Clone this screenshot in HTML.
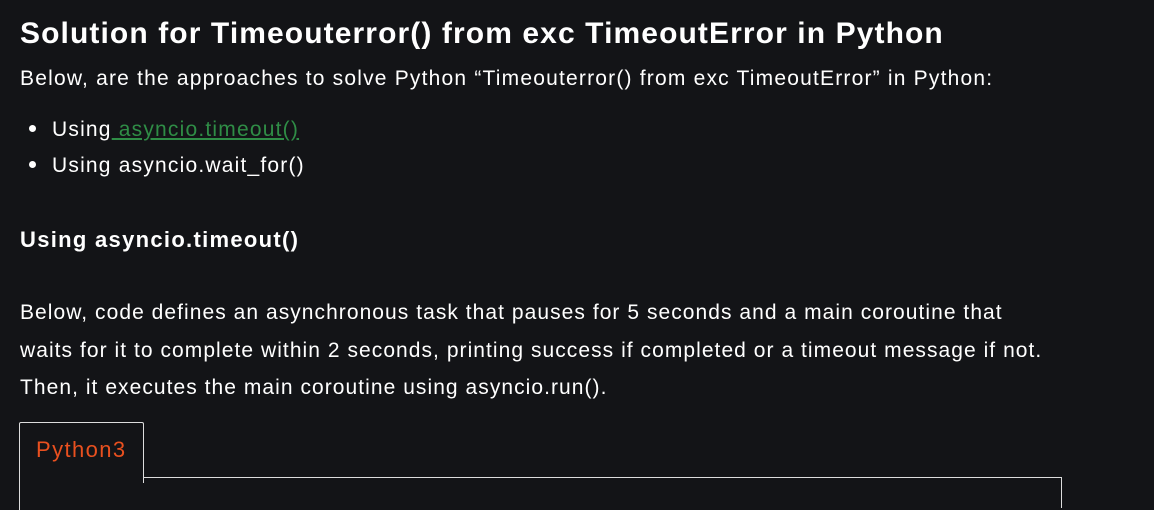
<!DOCTYPE html>
<html><head><style>
body{margin:0;background:#131417;width:1154px;height:497px;overflow:hidden;font-family:"Liberation Sans",sans-serif;color:#fff;position:relative}
.a{position:absolute;white-space:nowrap}
h1{position:absolute;left:20px;top:17px;margin:0;font-size:30px;font-weight:bold;white-space:nowrap;letter-spacing:1.1px}
.p{font-size:21px;letter-spacing:1.2px}
a{color:#2f8d46;text-decoration:underline}
.dot{display:inline-block;width:7px;height:7px;border-radius:50%;background:#fff;margin-right:16px;vertical-align:middle;position:relative;top:-2px}
</style></head><body>
<h1>Solution for Timeouterror() from exc TimeoutError in Python</h1>
<div class="a p" style="left:20px;top:67px">Below, are the approaches to solve Python “Timeouterror() from exc TimeoutError” in Python:</div>
<div class="a p" style="left:29px;top:118px"><span class="dot"></span>Using<a> asyncio.timeout()</a></div>
<div class="a p" style="left:29px;top:154px"><span class="dot"></span>Using asyncio.wait_for()</div>
<div class="a" style="left:20px;top:227px;font-size:22px;font-weight:bold;letter-spacing:1.3px">Using asyncio.timeout()</div>
<div class="a p" style="left:20px;top:294px;line-height:37.5px;letter-spacing:1.05px">Below, code defines an asynchronous task that pauses for 5 seconds and a main coroutine that<br>waits for it to complete within 2 seconds, printing success if completed or a timeout message if not.<br>Then, it executes the main coroutine using asyncio.run().</div>
<div style="position:absolute;left:19px;top:422px;width:123px;height:60px;border:1px solid #ddd;border-bottom:none;border-radius:2px 2px 0 0"></div>
<div style="position:absolute;left:19px;top:470px;width:1px;height:40px;background:#ddd"></div>
<div class="a" style="left:36px;top:437px;font-size:22px;color:#e9501f;letter-spacing:1.4px">Python3</div>
<div style="position:absolute;left:143px;top:477px;width:918px;height:30px;border-top:1px solid #ddd;border-right:1px solid #ddd"></div>
</body></html>
